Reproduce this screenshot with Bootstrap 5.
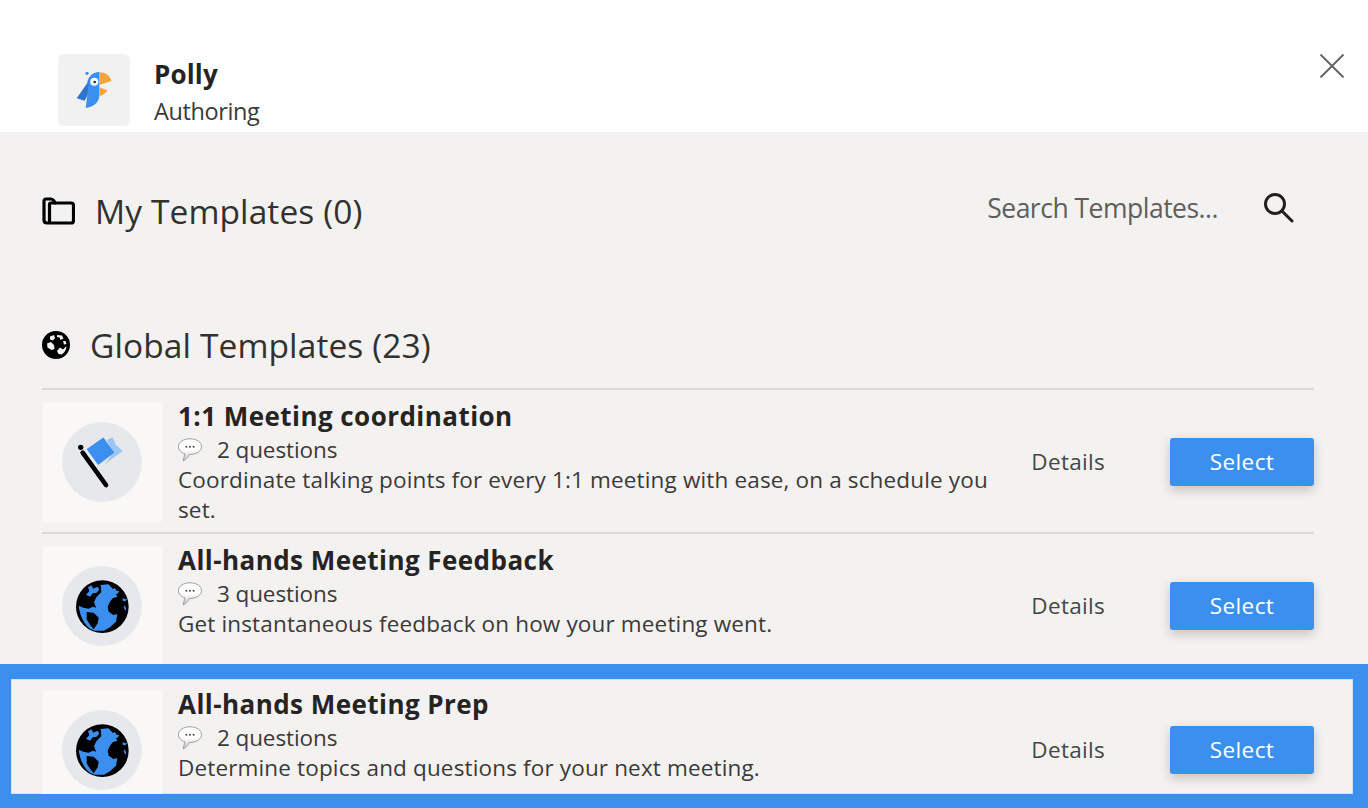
<!DOCTYPE html>
<html lang="en">
<head>
    <meta charset="UTF-8">
    <meta name="viewport" content="width=device-width, initial-scale=1.0">
    <title>Polly Authoring</title>
    <link href="https://cdn.jsdelivr.net/npm/bootstrap@5.3.0/dist/css/bootstrap.min.css" rel="stylesheet">
    <style>
        html, body { height: 808px; overflow: hidden; }
        body { font-family: "Open Sans", "Noto Sans", sans-serif; background: #f3f2f1; color: #252423; }
        .app-head { height: 132px; background: #fff; padding: 54px 24px 0 58px; }
        .app-tile { width: 72px; height: 72px; background: #f1f1f1; border-radius: 6px; flex: none; }
        .app-tile svg { width: 72px; height: 72px; display: block; }
        .app-name { font-size: 26px; font-weight: 700; line-height: 36px; margin-top: 2px; letter-spacing: .15px; }
        .app-sub { font-size: 23.5px; line-height: 36px; color: #3b3a39; margin-top: 1px; letter-spacing: -.4px; }
        .close-x { width: 24px; height: 24px; display: block; }
        .tpl-main { padding: 56px 54px 0 42px; }
        .sec-title { font-size: 33.5px; font-weight: 400; line-height: 46px; margin: 0; color: #323130; letter-spacing: .1px; }
        .sec-ico-folder { width: 33px; height: 28px; margin-right: 20px; }
        .sec-ico-globe { width: 28px; height: 28px; margin-right: 20px; }
        .search-box { margin-top: 2px; }
        .search-txt { font-size: 26.5px; color: #605e5c; margin-right: 46px; line-height: 36px; letter-spacing: -.5px; }
        .search-ico { width: 30px; height: 30px; margin-right: 20px; }
        .sec-mine { height: 74px; }
        .sec-global { margin-top: 60px; height: 46px; }
        .tpl-rows { margin-top: 20px; }
        .tpl-row { border-top: 2px solid #dcdad8; padding-top: 12px; height: 144px; }
        .thumb { width: 120px; height: 120px; background: #f9f8f7; flex: none; margin-right: 16px; }
        .thumb svg { width: 120px; height: 120px; display: block; }
        .tpl-name { font-size: 26px; font-weight: 700; line-height: 30px; margin: -1px 0 1px; color: #252423; letter-spacing: .45px; }
        .tpl-q { font-size: 22.5px; line-height: 30px; color: #3b3a39; margin-top: 4px; letter-spacing: -.1px; }
        .tpl-q svg { width: 24px; height: 24px; margin-right: 15px; flex: none; }
        .tpl-desc { font-size: 22.5px; line-height: 30px; color: #3b3a39; letter-spacing: .15px; }
        .tpl-text { width: 824px; }
        .tpl-actions { margin-left: auto; height: 120px; }
        .details-lnk { font-size: 22.5px; font-weight: 500; color: #484644; margin-right: 65px; text-decoration: none; letter-spacing: .3px; }
        .btn-pick { width: 144px; height: 48px; background: #3b8fef; border: 0; border-radius: 3px; color: #fff; font-size: 22.5px; letter-spacing: .4px; box-shadow: 0 4px 12px rgba(0,0,0,.2); padding: 0; }
        .focus-wrap { margin: -12px -54px 0 -42px; height: 144px; border-style: solid; border-color: #3b8fef; border-width: 15px 15px 14px 11px; background: #f3f2f1; box-shadow: inset 0 0 0 1px #cfe2f8; padding: 0 39px 0 31px; overflow: hidden; }
        .focus-wrap .tpl-row { border-top: 0; padding-top: 11px; }
    </style>
</head>
<body>
    <svg width="0" height="0" class="d-block">
        <defs>
            <linearGradient id="bubble-fill" x1="0" y1="0" x2="0" y2="1">
                <stop offset="0" stop-color="#fff"/><stop offset=".5" stop-color="#fff"/><stop offset="1" stop-color="#c8c8c8"/>
            </linearGradient>
            <symbol id="ico-bubble" viewBox="0 0 24 24">
                <path d="M12 .8C5.600.8.500 3.800.500 8.600c0 3.600 2.800 6.200 6.400 7.200-.3 2.200-1.200 4.200-1.900 7.200 2.800-1.400 5-4 6.400-6.600h.6c6.400 0 11.500-3.200 11.500-7.800C23.500 3.800 18.400.8 12 .8z" fill="url(#bubble-fill)" stroke="#9c9c9c" stroke-width="1"/>
                <circle cx="8.400" cy="8.800" r="1" fill="#444"/><circle cx="12" cy="8.800" r="1" fill="#444"/><circle cx="15.600" cy="8.800" r="1" fill="#444"/>
            </symbol>
            <symbol id="ico-earth" viewBox="0 0 240 240">
                <circle cx="120" cy="120" r="120" fill="#e6e8ec"/>
                <circle cx="121" cy="122" r="79" fill="#000"/>
                <path d="M116 57L139 55 156 72 166 92 152 97 144 107 137 122 140 137 154 147 166 144 162 167 144 184 126 194 99 194C75 190 55 160 50 119L64 125 80 128 92 122 102 125 96 108 104 92 118 78Z" fill="#3b8fef"/>
                <path d="M74 138L95 140 110 155 107 172 95 190 85 178 74 160Z" fill="#000"/>
                <path d="M78 64L88 58 94 68 106 62 112 70 104 80 92 82 84 92 72 86 82 76Z" fill="#3b8fef"/>
                <path d="M150 72l8-6 6 8 8 2-6 8-12-2zM182 96l8 4 6-2-6 8-8-2zM187 118l5 8 0 8-7-8z" fill="#3b8fef"/>
            </symbol>
            <symbol id="ico-flag" viewBox="0 0 240 240">
                <circle cx="120" cy="120" r="120" fill="#e6e8ec"/>
                <path d="M134 54l18-8 10 23 20 18-53 39 25-32z" fill="#9cc4f5"/>
                <path d="M77 82l47-33 30 43-45 34z" fill="#3b8fef" stroke="#3b8fef" stroke-width="4" stroke-linejoin="round"/>
                <path d="M62 92l70 97" stroke="#000" stroke-width="14" stroke-linecap="round"/>
                <circle cx="56" cy="76" r="8" fill="#000"/>
            </symbol>
        </defs>
    </svg>

    <header class="app-head d-flex">
        <div class="app-tile">
            <svg viewBox="54 42 216 216">
                <circle cx="141" cy="100" r="5" fill="#3b8fef"/>
                <path d="M178 97c-20 0-34 14-36 32l-32 46 24 7z" fill="#2f75cc"/>
                <path d="M178 97c-20 0-32 14-32 34l-9 73c20-2 40-14 41-36z" fill="#3b8fef"/>
                <circle cx="163" cy="125" r="12" fill="#fff"/>
                <circle cx="164" cy="126" r="4" fill="#1c2b3a"/>
                <path d="M178 97c18 0 32 10 36 26l-36 12z" fill="#f7a23b"/>
                <path d="M178 142l24 9c-4 9-14 16-24 17z" fill="#f7a23b"/>
            </svg>
        </div>
        <div class="ms-4 flex-grow-1">
            <div class="app-name">Polly</div>
            <div class="app-sub">Authoring</div>
        </div>
        <svg class="close-x" viewBox="0 0 24 24"><path d="M.5.5l23 23M23.500.5l-23 23" stroke="#666" stroke-width="2" fill="none"/></svg>
    </header>

    <main class="tpl-main">
        <div class="sec-mine d-flex justify-content-between align-items-start">
            <div class="d-flex align-items-center">
                <svg class="sec-ico-folder" viewBox="0 0 33 28" fill="none" stroke="#000" stroke-width="3.200" stroke-linejoin="round"><path d="M2 23V4c0-1.300.7-2 2-2h5c1.500 0 2 .5 3 2l1 2h16c1.600 0 2.500.9 2.500 2.500v15c0 1.600-.9 2.500-2.500 2.500H5c-2 0-3-1-3-3z"/><path d="M7.500 26V7.500c0-.8.5-1.500 1.500-1.500h5"/></svg>
                <h2 class="sec-title">My Templates (0)</h2>
            </div>
            <div class="search-box d-flex align-items-center">
                <span class="search-txt">Search Templates...</span>
                <svg class="search-ico" viewBox="0 0 30 30" fill="none" stroke="#201f1e" stroke-width="3" stroke-linecap="round"><circle cx="11" cy="11" r="9.500"/><path d="M18 18l10 10"/></svg>
            </div>
        </div>

        <div class="sec-global d-flex align-items-center">
            <svg class="sec-ico-globe" viewBox="0 0 28 28"><circle cx="14" cy="14" r="14" fill="#000"/><path d="M8 5.500l4-1.500 1 3-2 2.500-3-1zM15 4l5 .5 1.500 3-3 1.500-1-2.500-2.500-.5zM5 12.500l4-1.500 3 3 .5 4-3 1-4-2.500zM15 20l3-3.500 3 2 3-3 .5.500c-.5 3.500-2.500 6-5 7.500l-3-.5zM21 10l2.500 0 1 3-2.500.5z" fill="#f3f2f1"/></svg>
            <h2 class="sec-title">Global Templates (23)</h2>
        </div>

        <div class="tpl-rows">
            <div class="tpl-row d-flex">
                <div class="thumb"><svg viewBox="-60 -60 360 360"><use href="#ico-flag" width="240" height="240"/></svg></div>
                <div class="tpl-text">
                    <h3 class="tpl-name">1:1 Meeting coordination</h3>
                    <div class="tpl-q d-flex align-items-center"><svg><use href="#ico-bubble"/></svg>2 questions</div>
                    <div class="tpl-desc">Coordinate talking points for every 1:1 meeting with ease, on a schedule you set.</div>
                </div>
                <div class="tpl-actions d-flex align-items-center">
                    <a href="#" class="details-lnk">Details</a>
                    <button class="btn btn-pick">Select</button>
                </div>
            </div>
            <div class="tpl-row d-flex">
                <div class="thumb"><svg viewBox="-60 -60 360 360"><use href="#ico-earth" width="240" height="240"/></svg></div>
                <div class="tpl-text">
                    <h3 class="tpl-name">All-hands Meeting Feedback</h3>
                    <div class="tpl-q d-flex align-items-center"><svg><use href="#ico-bubble"/></svg>3 questions</div>
                    <div class="tpl-desc">Get instantaneous feedback on how your meeting went.</div>
                </div>
                <div class="tpl-actions d-flex align-items-center">
                    <a href="#" class="details-lnk">Details</a>
                    <button class="btn btn-pick">Select</button>
                </div>
            </div>
            <div class="focus-wrap position-relative">
                <div class="tpl-row d-flex">
                    <div class="thumb"><svg viewBox="-60 -60 360 360"><use href="#ico-earth" width="240" height="240"/></svg></div>
                    <div class="tpl-text">
                        <h3 class="tpl-name">All-hands Meeting Prep</h3>
                        <div class="tpl-q d-flex align-items-center"><svg><use href="#ico-bubble"/></svg>2 questions</div>
                        <div class="tpl-desc">Determine topics and questions for your next meeting.</div>
                    </div>
                    <div class="tpl-actions d-flex align-items-center">
                        <a href="#" class="details-lnk">Details</a>
                        <button class="btn btn-pick">Select</button>
                    </div>
                </div>
            </div>
        </div>
    </main>

    <script src="https://cdn.jsdelivr.net/npm/bootstrap@5.3.0/dist/js/bootstrap.bundle.min.js"></script>
</body>
</html>
